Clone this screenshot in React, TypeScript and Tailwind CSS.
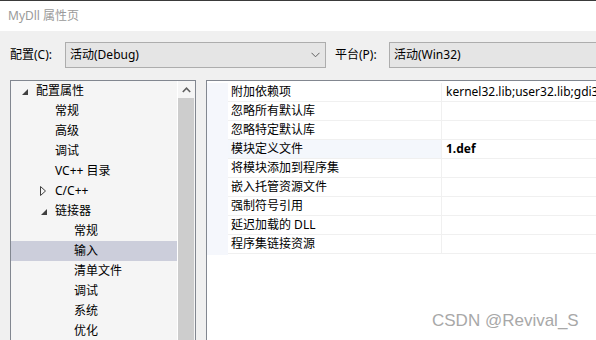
import React from "react";

const FONT = { fontFamily: "'Noto Sans','Noto Sans CJK SC',sans-serif" };

function Chevron() {
  return (
    <svg width="9" height="6" viewBox="0 0 9 6" className="shrink-0">
      <path d="M0.5 0.8 L4.5 4.8 L8.5 0.8" fill="none" stroke="#606060" strokeWidth="1" />
    </svg>
  );
}

function Expanded() {
  return (
    <svg width="6" height="6" viewBox="0 0 6 6">
      <path d="M6 0 L6 6 L0 6 Z" fill="#404040" />
    </svg>
  );
}

function Collapsed() {
  return (
    <svg width="6" height="10" viewBox="0 0 6 10">
      <path d="M0.5 0.5 L5.5 5 L0.5 9.5 Z" fill="none" stroke="#404040" strokeWidth="1" />
    </svg>
  );
}

type TreeItem = { label: string; level: number; arrow?: "open" | "closed"; selected?: boolean };

const tree: TreeItem[] = [
  { label: "配置属性", level: 0, arrow: "open" },
  { label: "常规", level: 1 },
  { label: "高级", level: 1 },
  { label: "调试", level: 1 },
  { label: "VC++ 目录", level: 1 },
  { label: "C/C++", level: 1, arrow: "closed" },
  { label: "链接器", level: 1, arrow: "open" },
  { label: "常规", level: 2 },
  { label: "输入", level: 2, selected: true },
  { label: "清单文件", level: 2 },
  { label: "调试", level: 2 },
  { label: "系统", level: 2 },
  { label: "优化", level: 2 },
];

const props: { name: string; value?: string; bold?: boolean; sel?: boolean }[] = [
  { name: "附加依赖项", value: "kernel32.lib;user32.lib;gdi32.lib;winspool.lib;comdlg32.lib" },
  { name: "忽略所有默认库" },
  { name: "忽略特定默认库" },
  { name: "模块定义文件", value: "1.def", bold: true, sel: true },
  { name: "将模块添加到程序集" },
  { name: "嵌入托管资源文件" },
  { name: "强制符号引用" },
  { name: "延迟加载的 DLL" },
  { name: "程序集链接资源" },
];

export default function App() {
  return (
    <div className="relative w-[596px] h-[340px] overflow-hidden bg-[#f0f0f0] flex flex-col text-[12px] text-black" style={FONT}>
      {/* title bar */}
      <div className="h-[31px] shrink-0 bg-white border-t border-[#3a3a3a] flex items-center pl-[8px] text-[12px] text-[#9a9a9a]">
        MyDll 属性页
      </div>

      {/* config row */}
      <div className="shrink-0 flex items-center pt-[11px] pl-[10px] h-[37px]">
        <span className="w-[55px]">配置(C):</span>
        <div className="w-[261px] h-[26px] bg-[#e5e5e5] border border-[#adadad] flex items-center pl-[4px] pr-[5px] justify-between">
          <span>活动(Debug)</span>
          <Chevron />
        </div>
        <span className="ml-[9px] w-[54px]">平台(P):</span>
        <div className="flex-1 h-[26px] bg-[#e5e5e5] border border-[#adadad] border-r-0 flex items-center pl-[4px]">
          <span>活动(Win32)</span>
        </div>
      </div>

      {/* main */}
      <div className="flex flex-1 mt-[12px] pl-[10px] min-h-0">
        {/* tree */}
        <div className="w-[186px] border-l border-t border-r border-[#828790] bg-[#f5f5f5] flex">
          <div className="w-[166px] flex flex-col">
            {tree.map((t, i) => (
              <div
                key={i}
                className={`h-[20px] shrink-0 flex items-center ${t.selected ? "bg-[#cccedb]" : ""}`}
                style={{ paddingLeft: 10 + t.level * 19 }}
              >
                <span className="w-[15px] h-[20px] flex items-center">
                  {t.arrow === "open" && <span className="pl-[1px] pt-[1px] flex"><Expanded /></span>}
                  {t.arrow === "closed" && <Collapsed />}
                </span>
                <span>{t.label}</span>
              </div>
            ))}
          </div>
          <div className="w-[18px] border-l border-white flex flex-col pr-[1px]">
            <div className="h-[17px] flex items-center justify-center">
              <svg width="9" height="6" viewBox="0 0 9 6">
                <path d="M0.8 5 L4.5 1.2 L8.2 5" fill="none" stroke="#606060" strokeWidth="1.6" />
              </svg>
            </div>
            <div className="flex-1 bg-[#cdcdcd]" />
          </div>
        </div>

        {/* property grid */}
        <div className="ml-[10px] flex-1 border-l border-t border-[#828790] bg-white flex pt-[2px]">
          <div className="w-[21px] bg-[#f5f7fc] h-[172px]" />
          <div className="flex-1 flex flex-col">
            {props.map((p, i) => (
              <div key={i} className="h-[19px] shrink-0 flex border-b border-[#f0f0f0]">
                <div className={`w-[214px] shrink-0 pl-[3px] flex items-center border-r border-[#f0f0f0] ${p.sel ? "bg-[#f4f7fc]" : ""}`}>
                  {p.name}
                </div>
                <div className={`flex-1 pl-[4px] flex items-center whitespace-nowrap overflow-hidden ${p.bold ? "font-bold" : ""}`}>
                  {p.value ?? ""}
                </div>
              </div>
            ))}
          </div>
        </div>
      </div>

      {/* watermark */}
      <div
        className="absolute left-[432px] top-[308px] text-[17px] text-[#a8a8a8] whitespace-nowrap"
        style={{ fontFamily: "'Liberation Sans',Arial,sans-serif" }}
      >
        CSDN @Revival_S
      </div>
    </div>
  );
}
